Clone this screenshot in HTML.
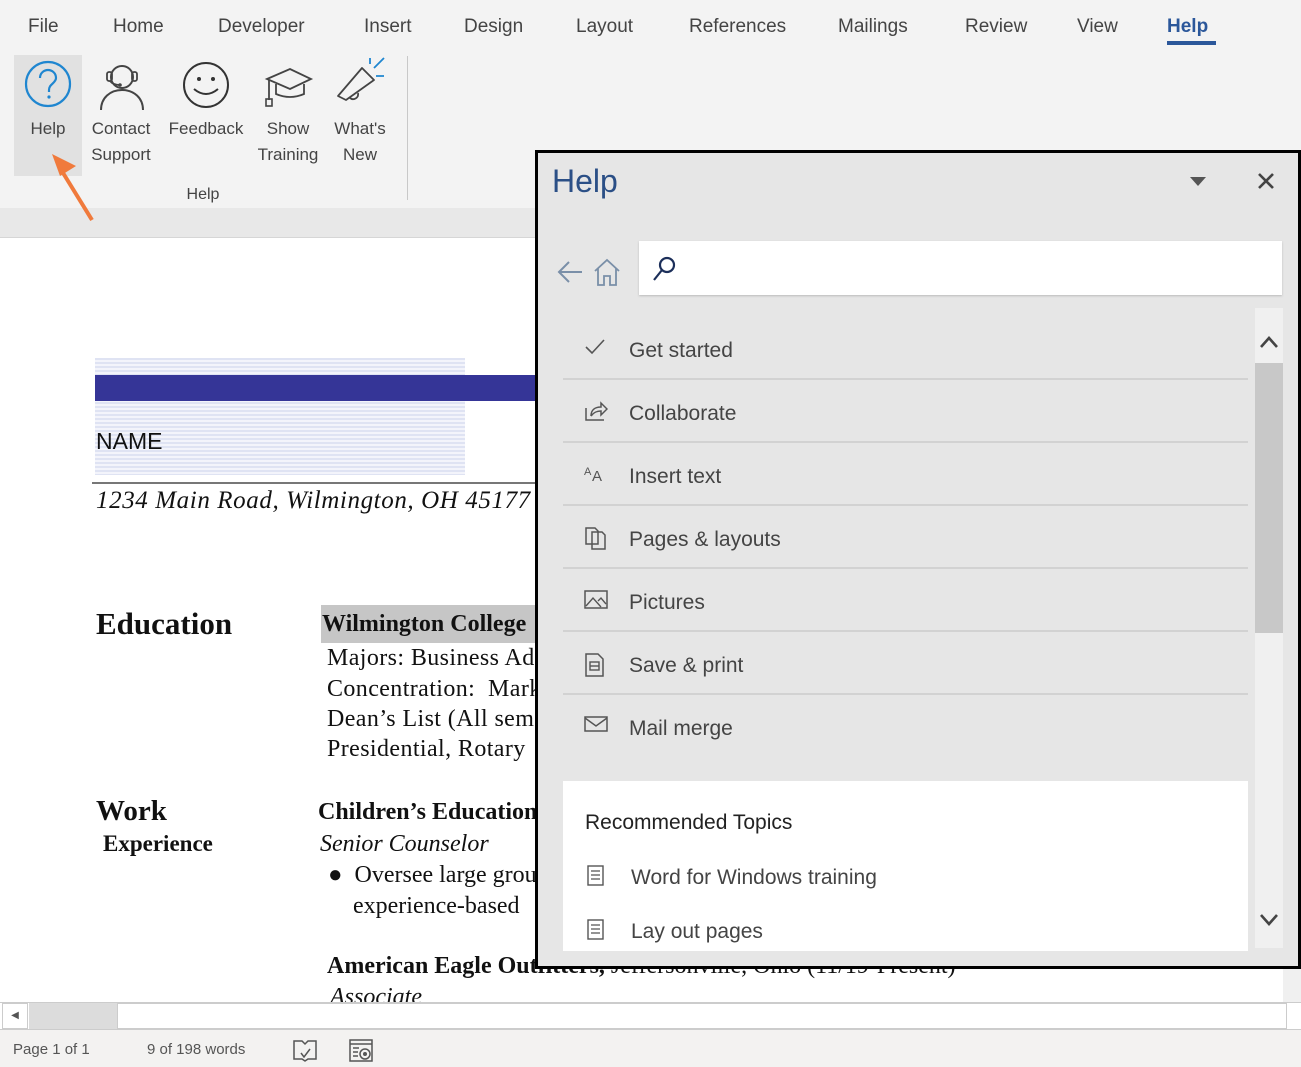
<!DOCTYPE html>
<html><head><meta charset="utf-8"><style>
*{margin:0;padding:0;box-sizing:border-box}
body{width:1301px;height:1067px;overflow:hidden;background:#fff;font-family:"Liberation Sans",sans-serif;position:relative}
.a{position:absolute;white-space:nowrap}
.tab{position:absolute;top:16px;font-size:19px;color:#444}
.rb{position:absolute;font-size:17px;color:#444;text-align:center;line-height:26px}
.serif{font-family:"Liberation Serif",serif;color:#111}
.item{position:absolute;left:25px;width:685px;height:63px;border-bottom:2px solid #d2d2d2}
.item .t{position:absolute;left:66px;top:22px;font-size:21px;color:#444}
.item svg{position:absolute;left:21px;top:20px}
</style></head><body>
<div class="a" style="left:0;top:0;width:1301px;height:208px;background:#f3f3f3"></div>
<div class="a" style="left:0;top:208px;width:1301px;height:30px;background:#e8e8e8;border-bottom:1px solid #d6d6d6"></div>
<div class="tab" style="left:28px">File</div>
<div class="tab" style="left:113px">Home</div>
<div class="tab" style="left:218px">Developer</div>
<div class="tab" style="left:364px">Insert</div>
<div class="tab" style="left:464px">Design</div>
<div class="tab" style="left:576px">Layout</div>
<div class="tab" style="left:689px">References</div>
<div class="tab" style="left:838px">Mailings</div>
<div class="tab" style="left:965px">Review</div>
<div class="tab" style="left:1077px">View</div>
<div class="tab" style="left:1167px;font-weight:bold;color:#2b579a">Help</div>
<div class="a" style="left:1167px;top:41px;width:49px;height:4px;background:#2b579a"></div>
<div class="a" style="left:14px;top:55px;width:68px;height:121px;background:#e1e1e1"></div>
<svg class="a" style="left:24px;top:60px" width="48" height="48" viewBox="0 0 48 48"><circle cx="24" cy="24" r="22" fill="none" stroke="#1f86d0" stroke-width="2.2"/><path d="M16 18c0-5 4-8 8-8s8 3 8 8c0 5-7 6-7 12v2" fill="none" stroke="#1f86d0" stroke-width="2.2"/><circle cx="25" cy="37" r="1.6" fill="#1f86d0"/></svg>
<svg class="a" style="left:98px;top:60px" width="48" height="50" viewBox="0 0 48 50"><circle cx="24" cy="17" r="11" fill="none" stroke="#444" stroke-width="2"/><path d="M3 50c0-12 9-20 21-20s21 8 21 20" fill="none" stroke="#444" stroke-width="2"/><rect x="9" y="12" width="5" height="9" rx="2" fill="none" stroke="#444" stroke-width="1.8"/><rect x="34" y="12" width="5" height="9" rx="2" fill="none" stroke="#444" stroke-width="1.8"/><path d="M12 21q3 4 10 4" fill="none" stroke="#444" stroke-width="1.8"/><circle cx="22" cy="25" r="1.8" fill="#444"/></svg>
<svg class="a" style="left:182px;top:61px" width="48" height="48" viewBox="0 0 48 48"><circle cx="24" cy="24" r="22" fill="none" stroke="#333" stroke-width="2"/><circle cx="17" cy="18" r="2" fill="#333"/><circle cx="31" cy="18" r="2" fill="#333"/><path d="M12 28q12 10 24 0" fill="none" stroke="#333" stroke-width="2"/></svg>
<svg class="a" style="left:264px;top:65px" width="50" height="44" viewBox="0 0 50 44"><path d="M3 14L26 4l21 10-21 10z" fill="none" stroke="#444" stroke-width="1.8"/><path d="M12 19v10q14 6 28 0V19" fill="none" stroke="#444" stroke-width="1.8"/><path d="M5 15v20" stroke="#444" stroke-width="1.8"/><rect x="2" y="34" width="6" height="7" fill="none" stroke="#444" stroke-width="1.6"/></svg>
<svg class="a" style="left:336px;top:56px" width="54" height="54" viewBox="0 0 54 54"><path d="M2 40L26 12l12 12-28 20z" fill="none" stroke="#444" stroke-width="1.8" stroke-linejoin="round"/><path d="M14 42a5 5 0 0 0 8-5" fill="none" stroke="#444" stroke-width="1.8"/><path d="M38 12l10-10M40 20h8M34 8V2" stroke="#1f86d0" stroke-width="1.8"/></svg>
<div class="rb" style="left:14px;top:116px;width:68px">Help</div>
<div class="rb" style="left:84px;top:116px;width:74px">Contact<br>Support</div>
<div class="rb" style="left:164px;top:116px;width:84px">Feedback</div>
<div class="rb" style="left:252px;top:116px;width:72px">Show<br>Training</div>
<div class="rb" style="left:328px;top:116px;width:64px">What's<br>New</div>
<div class="rb" style="left:180px;top:182px;width:46px;font-size:16px">Help</div>
<div class="a" style="left:407px;top:56px;width:1px;height:144px;background:#c8c8c8"></div>
<svg class="a" style="left:48px;top:150px" width="50" height="75" viewBox="0 0 50 75"><path d="M44 70L12 18" stroke="#f07a3c" stroke-width="4"/><path d="M4 4l24 12-16 10z" fill="#f07a3c"/></svg>
<div class="a" style="left:95px;top:358px;width:370px;height:117px;background:repeating-linear-gradient(#dfe3f3 0 2px,#f3f4fb 2px 4px)"></div>
<div class="a" style="left:95px;top:375px;width:450px;height:26px;background:#353597"></div>
<div class="a" style="left:96px;top:428px;font-size:23px;color:#111">NAME</div>
<div class="a" style="left:92px;top:482px;width:450px;height:2px;background:#777"></div>
<div class="a serif" style="left:96px;top:487px;font-size:25px;font-style:italic;letter-spacing:0.6px">1234 Main Road, Wilmington, OH 45177</div>
<div class="a serif" style="left:96px;top:606px;font-size:31px;font-weight:bold">Education</div>
<div class="a" style="left:321px;top:605px;width:220px;height:38px;background:#c6c6c6"></div>
<div class="a serif" style="left:322px;top:611px;font-size:24px;font-weight:bold">Wilmington College</div>
<div class="a serif" style="left:327px;top:645px;font-size:24px;letter-spacing:0.4px">Majors: Business Admin</div>
<div class="a serif" style="left:327px;top:676px;font-size:24px;letter-spacing:0.4px">Concentration:&nbsp; Marketing</div>
<div class="a serif" style="left:327px;top:706px;font-size:24px;letter-spacing:0.4px">Dean’s List (All semesters)</div>
<div class="a serif" style="left:327px;top:736px;font-size:24px;letter-spacing:0.4px">Presidential, Rotary</div>
<div class="a serif" style="left:96px;top:795px;font-size:29px;font-weight:bold">Work</div>
<div class="a serif" style="left:103px;top:831px;font-size:23px;font-weight:bold">Experience</div>
<div class="a serif" style="left:318px;top:799px;font-size:24px;font-weight:bold">Children’s Education</div>
<div class="a serif" style="left:320px;top:831px;font-size:24px;font-style:italic">Senior Counselor</div>
<div class="a serif" style="left:328px;top:862px;font-size:24px">●&nbsp; Oversee large groups</div>
<div class="a serif" style="left:353px;top:893px;font-size:24px">experience-based</div>
<div class="a serif" style="left:327px;top:953px;font-size:24px;font-weight:bold">American Eagle Outfitters, <span style="font-weight:normal">Jeffersonville, Ohio (11/19-Present)</span></div>
<div class="a serif" style="left:330px;top:984px;font-size:24px;font-style:italic">Associate</div>
<div class="a" style="left:1283px;top:238px;width:18px;height:764px;background:#f0f0f0"></div>
<div class="a" style="left:0;top:1002px;width:1301px;height:28px;background:#fff;border-top:1px solid #ccc;border-bottom:1px solid #ccc"></div>
<div class="a" style="left:2px;top:1003px;width:26px;height:26px;border:1px solid #ccc;background:#fff;font-size:10px;color:#555;text-align:center;line-height:24px">◀</div>
<div class="a" style="left:29px;top:1003px;width:88px;height:26px;background:#dcdcdc"></div>
<div class="a" style="left:117px;top:1003px;width:1170px;height:26px;border:1px solid #ccc;background:#fff"></div>
<div class="a" style="left:0;top:1030px;width:1301px;height:37px;background:#f3f2f1"></div>
<div class="a" style="left:13px;top:1041px;font-size:15px;color:#555">Page 1 of 1</div>
<div class="a" style="left:147px;top:1041px;font-size:15px;color:#555">9 of 198 words</div>
<svg class="a" style="left:292px;top:1039px" width="26" height="24" viewBox="0 0 26 24"><path d="M2 2h8l3 3 3-3h8v18h-8l-3 2-3-2H2z" fill="none" stroke="#555" stroke-width="1.5"/><path d="M9 14l3 4 6-8" fill="none" stroke="#555" stroke-width="1.5"/></svg>
<svg class="a" style="left:349px;top:1039px" width="26" height="24" viewBox="0 0 26 24"><rect x="1" y="1" width="22" height="21" fill="none" stroke="#555" stroke-width="1.5"/><path d="M1 5h22M4 9h6M4 13h5M4 17h5" stroke="#555" stroke-width="1.5"/><circle cx="16" cy="15" r="5" fill="none" stroke="#555" stroke-width="1.5"/><circle cx="16" cy="15" r="2" fill="#555"/></svg>
<div class="a" style="left:535px;top:150px;width:766px;height:819px;background:#e6e6e6;border:3px solid #000">
 <div class="a" style="left:14px;top:10px;font-size:32px;color:#2b4f86">Help</div>
 <svg class="a" style="left:652px;top:24px" width="16" height="10"><path d="M0 0h16L8 9z" fill="#555"/></svg>
 <svg class="a" style="left:719px;top:19px" width="18" height="18"><path d="M2 2l14 14M16 2L2 16" stroke="#444" stroke-width="2.6"/></svg>
 <svg class="a" style="left:18px;top:106px" width="30" height="26" viewBox="0 0 30 26"><path d="M26 13H3M13 3L3 13l10 10" fill="none" stroke="#7a8fa8" stroke-width="2"/></svg>
 <svg class="a" style="left:54px;top:104px" width="30" height="30" viewBox="0 0 30 30"><path d="M3 14L15 3l12 11M6 11v17h6v-9h6v9h6V11" fill="none" stroke="#7a8fa8" stroke-width="1.8"/></svg>
 <div class="a" style="left:101px;top:88px;width:643px;height:54px;background:#fff;box-shadow:0 1px 2px #bbb"></div>
 <svg class="a" style="left:112px;top:100px" width="30" height="30" viewBox="0 0 30 30"><circle cx="17" cy="12" r="7" fill="none" stroke="#1c2f5a" stroke-width="2.2"/><path d="M12 17L4 27" stroke="#1c2f5a" stroke-width="2.2"/></svg>
 <div class="a" style="left:717px;top:155px;width:28px;height:640px;background:#f0f0f0"></div>
 <div class="a" style="left:717px;top:210px;width:28px;height:270px;background:#c8c8c8"></div>
 <svg class="a" style="left:721px;top:182px" width="20" height="14"><path d="M2 12L10 3l8 9" fill="none" stroke="#444" stroke-width="2.6"/></svg>
 <svg class="a" style="left:721px;top:760px" width="20" height="14"><path d="M2 2l8 9 8-9" fill="none" stroke="#444" stroke-width="2.6"/></svg>
 <div class="item" style="top:164px"><svg width="22" height="20"><path d="M2 10l6 6L20 3" fill="none" stroke="#555" stroke-width="1.6"/></svg><div class="t">Get started</div></div>
 <div class="item" style="top:227px"><svg width="24" height="22"><path d="M2 8v12h18M7 16c0-6 4-9 10-9V3l6 6-6 6v-4c-4 0-7 1-10 5" fill="none" stroke="#555" stroke-width="1.5"/></svg><div class="t">Collaborate</div></div>
 <div class="item" style="top:290px"><svg width="24" height="22"><text x="0" y="12" font-size="11" fill="#555" font-family="Liberation Sans">A</text><text x="8" y="18" font-size="15" fill="#555" font-family="Liberation Sans">A</text></svg><div class="t">Insert text</div></div>
 <div class="item" style="top:353px"><svg width="24" height="24"><path d="M2 2h9l3 3v13H2z M8 6h10l3 3v14H8z" fill="none" stroke="#555" stroke-width="1.5"/></svg><div class="t">Pages &amp; layouts</div></div>
 <div class="item" style="top:416px"><svg width="26" height="22"><rect x="1" y="2" width="22" height="17" fill="none" stroke="#555" stroke-width="1.5"/><path d="M2 17l7-8 8 9M14 12l3-3 5 6" fill="none" stroke="#555" stroke-width="1.4"/></svg><div class="t">Pictures</div></div>
 <div class="item" style="top:479px"><svg width="24" height="26"><path d="M2 2h12l5 5v17H2z" fill="none" stroke="#555" stroke-width="1.5"/><rect x="6" y="10" width="9" height="8" fill="none" stroke="#555" stroke-width="1.4"/><path d="M6 14h9" stroke="#555" stroke-width="1.4"/></svg><div class="t">Save &amp; print</div></div>
 <div class="item" style="top:542px;border-bottom:none"><svg width="26" height="20"><rect x="1" y="2" width="22" height="14" fill="none" stroke="#555" stroke-width="1.5"/><path d="M1 3l11 8 11-8" fill="none" stroke="#555" stroke-width="1.5"/></svg><div class="t">Mail merge</div></div>
 <div class="a" style="left:25px;top:628px;width:685px;height:170px;background:#fff">
  <div class="a" style="left:22px;top:30px;font-size:21px;color:#222">Recommended Topics</div>
  <svg class="a" style="left:24px;top:84px" width="18" height="22"><rect x="1" y="1" width="15" height="19" fill="none" stroke="#555" stroke-width="1.4"/><path d="M4 6h9M4 10h9M4 14h9" stroke="#555" stroke-width="1.2"/></svg>
  <div class="a" style="left:68px;top:85px;font-size:21px;color:#444">Word for Windows training</div>
  <svg class="a" style="left:24px;top:138px" width="18" height="22"><rect x="1" y="1" width="15" height="19" fill="none" stroke="#555" stroke-width="1.4"/><path d="M4 6h9M4 10h9M4 14h9" stroke="#555" stroke-width="1.2"/></svg>
  <div class="a" style="left:68px;top:139px;font-size:21px;color:#444">Lay out pages</div>
 </div>
</div>
</body></html>
